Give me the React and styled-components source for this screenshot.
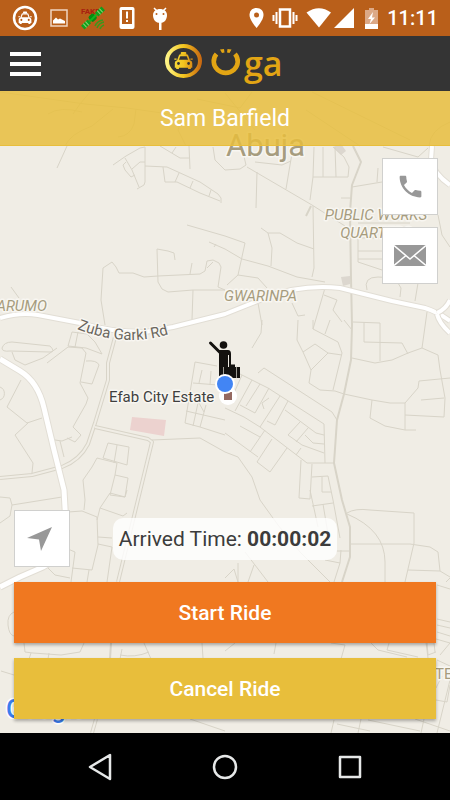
import styled, { createGlobalStyle } from "styled-components";

const GlobalStyle = createGlobalStyle`
  * {
    box-sizing: border-box;
  }

  body {
    margin: 0;
    background-color: #000;
    font-family: Roboto, "Liberation Sans", sans-serif;
  }

  button {
    margin: 0;
    padding: 0;
    border: none;
    background: none;
    font-family: inherit;
    cursor: pointer;
  }

  svg {
    display: block;
  }
`;

const Screen = styled.div`
  display: flex;
  flex-direction: column;
  min-height: 100vh;
`;

const StatusBar = styled.div`
  display: flex;
  justify-content: space-between;
  align-items: center;
  height: 36px;
  padding: 0 12px;
  background-color: #b95f1a;
`;

const StatusGroup = styled.div`
  display: flex;
  align-items: center;
  gap: ${({ $gap }) => $gap};
`;

const Clock = styled.time`
  color: white;
  font-size: 20px;
  font-weight: 500;
  line-height: 24px;
`;

const Header = styled.header`
  display: grid;
  grid-template-columns: 1fr auto 1fr;
  align-items: center;
  height: 55px;
  padding: 0 10px;
  background-color: #343434;
`;

const MenuButton = styled.button`
  display: flex;
  flex-direction: column;
  gap: 6px;
  width: 31px;
`;

const MenuLine = styled.span`
  height: 4px;
  background-color: white;
`;

const MapArea = styled.main`
  position: relative;
  flex: 1;
  display: flex;
  flex-direction: column;
  overflow: hidden;
  background-color: #f0ede5;
`;

const MapCanvas = styled.svg`
  position: absolute;
  inset: 0;
  width: 100%;
  height: 100%;
`;

const Overlay = styled.div`
  position: relative;
  flex: 1;
  display: flex;
  flex-direction: column;
  justify-content: space-between;
`;

const RiderName = styled.h1`
  margin: 0;
  height: 55px;
  border-bottom: 1px solid #e8be3c;
  background-color: rgba(231, 190, 60, 0.84);
  color: white;
  font-size: 23px;
  font-weight: 400;
  line-height: 56px;
  text-align: center;
`;

const ContactList = styled.div`
  display: flex;
  flex-direction: column;
  align-items: flex-end;
  gap: 12px;
  padding: 12px 12px 0;
`;

const SquareButton = styled.button`
  display: flex;
  justify-content: center;
  align-items: center;
  width: 56px;
  height: 57px;
  border: 1px solid #d0d0ce;
  background-color: white;
`;

const Actions = styled.div`
  display: flex;
  flex-direction: column;
  gap: 15px;
  padding: 0 14px 14px;
`;

const TimeRow = styled.div`
  display: grid;
  grid-template-columns: 1fr auto 1fr;
  align-items: center;
`;

const ArrivedTime = styled.div`
  padding: 0 6px;
  border-radius: 10px;
  background-color: rgba(255, 255, 255, 0.8);
  color: #3c3c3c;
  font-size: 21px;
  line-height: 42px;
`;

const RideButton = styled.button`
  height: 61px;
  background-color: ${({ $color }) => $color};
  box-shadow: 0 2px 3px rgba(0, 0, 0, 0.3);
  color: white;
  font-size: 21px;
  font-weight: 500;
`;

const NavBar = styled.nav`
  display: flex;
  height: 67px;
  padding: 0 38px;
  background-color: black;
`;

const NavButton = styled.button`
  flex: 1;
  display: flex;
  justify-content: center;
  align-items: center;
`;

const Taxi = ({ fill, hole }) => (
  <g fill={fill}>
    <rect x="9" y="0" width="6" height="3" rx="1" />
    <path d="M5 9 7 3.500Q7.500 2.500 8.500 2.500H15.500Q16.500 2.500 17 3.500L19 9Q21.500 9.500 21.500 12V17H20V18.500H17V17H7V18.500H4V17H2.500V12Q2.500 9.500 5 9Z" />
    <path d="M2 7H4.500V8.500H2ZM19.500 7H22V8.500H19.500Z" />
    <path d="M7 8.500 8.500 4.500H15.500L17 8.500Z" fill={hole} />
    <circle cx="6.500" cy="12.500" r="1.500" fill={hole} />
    <circle cx="17.500" cy="12.500" r="1.500" fill={hole} />
  </g>
);

const TaxiStatusIcon = () => (
  <svg width="26" height="26" viewBox="0 0 26 26">
    <circle cx="13" cy="13" r="11" fill="none" stroke="white" strokeWidth="2.500" />
    <g transform="translate(5 6.500) scale(0.670)">
      <Taxi fill="white" hole="#b95f1a" />
    </g>
  </svg>
);

const PictureIcon = () => (
  <svg width="18" height="18" viewBox="0 0 18 18">
    <rect x="1" y="1" width="16" height="16" fill="none" stroke="#efd5c2" strokeWidth="1.500" />
    <path d="M3 14.500V11.500L6 8.500 8 10.500 10 9.500 12 10.500 15 12V14.500Z" fill="white" />
  </svg>
);

const FakeGpsIcon = () => (
  <svg width="26" height="26" viewBox="0 0 26 26">
    <text x="1" y="9" fill="#a82010" fontSize="8" fontWeight="700" fontFamily="Roboto, sans-serif">
      FAKE
    </text>
    <g transform="rotate(-43 13 13)">
      <rect x="-1" y="10.500" width="9" height="5" fill="#10a01c" />
      <rect x="18" y="10.500" width="9" height="5" fill="#10a01c" />
      <rect x="9.500" y="9" width="7" height="7" rx="2" fill="#078c12" />
      <path d="M2 10.500V15.500M5 10.500V15.500M21 10.500V15.500M24 10.500V15.500" stroke="#8bd072" />
      <path d="M8 13H18" stroke="#12b51e" strokeWidth="2" />
    </g>
    <path d="M15 21Q17 16 23 15M17 23Q19 18 24 17M20 24Q21 21 24 20" fill="none" stroke="#3a991c" strokeWidth="1.500" />
  </svg>
);

const PhoneAlertIcon = () => (
  <svg width="18" height="24" viewBox="0 0 18 24">
    <rect x="1.500" y="1" width="15" height="22" rx="2" fill="white" />
    <rect x="4" y="4" width="10" height="14" fill="#b95f1a" />
    <path d="M8 5.500H10V12.500H8ZM8 14H10V16H8Z" fill="white" />
  </svg>
);

const DebugIcon = () => (
  <svg width="24" height="24" viewBox="0 0 24 24">
    <path d="M6 2 8.500 4.500M18 2 15.500 4.500" stroke="white" strokeWidth="1.500" />
    <path d="M5 9C5 1 19 1 19 9C19 14 16 17 12 17S5 14 5 9Z" fill="white" />
    <rect x="11" y="16" width="2.500" height="8" fill="white" />
    <circle cx="8.500" cy="8" r="1" fill="#b95f1a" />
    <circle cx="15.500" cy="8" r="1" fill="#b95f1a" />
  </svg>
);

const PinIcon = () => (
  <svg width="15" height="20" viewBox="0 0 15 20">
    <path d="M7.500 0C3 0 0.500 3.200 0.500 7C0.500 12 7.500 20 7.500 20S14.500 12 14.500 7C14.500 3.200 12 0 7.500 0Z" fill="white" />
    <circle cx="7.500" cy="7" r="2.500" fill="#b95f1a" />
  </svg>
);

const VibrateIcon = () => (
  <svg width="26" height="20" viewBox="0 0 26 20">
    <rect x="8" y="1.500" width="10" height="17" fill="none" stroke="white" strokeWidth="2.500" />
    <path d="M4.500 4V16M21.500 4V16" stroke="white" strokeWidth="2" />
    <path d="M1.500 7V13M24.500 7V13" stroke="white" strokeWidth="2" />
  </svg>
);

const SignalIcon = () => (
  <svg width="50" height="20" viewBox="0 0 50 20">
    <path d="M0.500 4.500Q13 -4 25 4.500L13 19.500Z" fill="white" />
    <path d="M48 0V20H28Z" fill="white" />
  </svg>
);

const BatteryIcon = () => (
  <svg width="15" height="21" viewBox="0 0 15 21">
    <path d="M5 0H10V2H14V21H1V2H5Z" fill="#dca987" />
    <path d="M1 16H14V21H1Z" fill="white" />
    <path d="M9 4 4 11H7L5.500 16 11 9.500H8Z" fill="white" />
  </svg>
);

const Logo = () => (
  <svg width="122" height="46" viewBox="164 40 122 46" role="img" aria-label="Oga">
    <defs>
      <linearGradient id="gold" gradientUnits="userSpaceOnUse" x1="166" x2="201" y1="0" y2="0">
        <stop offset="0" stopColor="#fff68a" />
        <stop offset="0.500" stopColor="#f3c51f" />
        <stop offset="1" stopColor="#c96a12" />
      </linearGradient>
      <linearGradient id="goldCar" gradientUnits="userSpaceOnUse" x1="2" x2="22" y1="0" y2="0">
        <stop offset="0" stopColor="#f7d838" />
        <stop offset="0.500" stopColor="#f3c51f" />
        <stop offset="1" stopColor="#d98a16" />
      </linearGradient>
    </defs>
    <ellipse cx="183.500" cy="60" rx="16.500" ry="15" fill="none" stroke="url(#gold)" strokeWidth="4" />
    <g transform="translate(172.500 51) scale(0.920)">
      <Taxi fill="url(#goldCar)" hole="#343434" />
    </g>
    <path d="M216.500 53A12 11.500 0 1 0 235 53" fill="none" stroke="#e2a514" strokeWidth="4.600" />
    <path d="M220 48.500 224 48 224.500 51.500 222 52ZM231.500 48.500 227.500 48 227 51.500 229.500 52Z" fill="#e2a514" />
    <text x="244" y="75" fill="#e2a514" fontSize="34" fontWeight="600" fontFamily="'Open Sans', 'Noto Sans', sans-serif">
      ga
    </text>
  </svg>
);

const PhoneIcon = () => (
  <svg width="29" height="29" viewBox="0 0 24 24">
    <path
      d="M6.620 10.790c1.440 2.830 3.760 5.140 6.590 6.590l2.200-2.200c.270-.270.670-.360 1.020-.240 1.120.370 2.330.570 3.570.570.550 0 1 .450 1 1V20c0 .550-.450 1-1 1-9.390 0-17-7.610-17-17 0-.550.450-1 1-1h3.500c.550 0 1 .450 1 1 0 1.250.200 2.450.570 3.570.110.350.030.740-.250 1.020l-2.200 2.200z"
      fill="#989898"
    />
  </svg>
);

const MailIcon = () => (
  <svg width="32" height="21" viewBox="0 0 32 21">
    <rect width="32" height="21" fill="#989898" />
    <path d="M0 0.500 16 14 32 0.500M0 20.500 12 10.500M32 20.500 20 10.500" fill="none" stroke="white" strokeWidth="1.500" />
  </svg>
);

const LocateIcon = () => (
  <svg width="30" height="26" viewBox="0 0 30 26">
    <path d="M25 1 14 25 12 13.500 0 12Z" fill="#989898" />
  </svg>
);

const lanes = [
  // north west
  "M67 146 57 168M113 165 126 156 140 148 145 147V182L144 185 137 189M125 158 132 170 139 187",
  "M126 162 123 165 125 170 131 177 135 175M132 169 140 162H145M145 166 167 167 200 182 218 194 221 198V203",
  "M163 167 165 182H177L200 193 220 201M179 173 175 182M193 181 190 188M211 190 209 196",
  "M160 146 180 158H189M189 146 190 169M176 147 172 153M213 147 215 160 225 170 240 169 246 165 242 148",
  "M187 225 225 236M209 242 225 249M216 244 214 247M11 287 19 298",
  "M175 260 174 253 168 251 157 249 158 282 162 289 168 292 193 290H225M192 263 190 274M193 290 192 320",
  "M105 325 101 300 103 268 112 262 116 267 119 273H133L144 277 158 276 200 274 205 271 207 261 213 260 219 263 221 267 218 287 225 290M207 268 213 262",
  // north east
  "M247 167 312 205 345 226M293 148 290 165 286 189M255 162 282 165 291 161M257 172 256 208",
  "M323 147V177M335 147 336 177M314 147 313 177 310 200M313 177H348L349 167 344 157 333 147",
  "M313 206 314 268 312 277M352 187 382 182M341 198H350M377 182 378 168",
  "M261 228 268 233H280L297 243 314 249M268 233 272 248 271 266",
  "M225 236 245 243 238 275 227 285M225 249 242 259 268 266 297 277 325 282M238 275 258 278 267 288",
  "M358 223H410M382 238H358V262L382 270M358 251H382M358 259H382",
  "M367 290Q363 277 378 277L395 278 401 288 400 297M418 283 415 301M438 215 442 235 450 247",
  "M383 147 418 157 428 148M258 303 262 325M292 303 298 316 305 315M325 288 313 329M324 295 337 300 333 310 342 322M427 312 422 348",
  // west
  "M2 348Q4 342 12 342L50 346Q56 352 50 352L10 351Q2 352 2 348M12 352 15 360 25 365 43 358 57 348",
  "M72 332 87 334 95 342 102 354 86 348 68 346ZM78 332 75 347",
  "M47 363 68 347 82 348 86 353 80 383 88 398 86 404 73 427 81 435 75 442 67 438M72 437 62 441 55 440M60 441 64 457",
  "M86 361Q97 360 99 365L92 384 81 382M21 380 7 407 27 423 42 418M28 423 15 435 33 463 32 473M0 387A7 7 0 0 1 0 400",
  "M108 443 129 447 127 465 103 458ZM117 445 114 463M97 458 117 463 115 475 128 478 125 497 110 495",
  "M97 458 92 467 83 480 85 500 84 510M115 475 110 495",
  "M0 497 10 498 12 505 62 497M12 505 10 516 0 523M68 512 82 511 97 517 98 545 92 570 72 568",
  "M97 520 100 508 123 516 127 513M100 508 110 493 125 497 127 490M98 537 112 538M98 544 112 547 107 582M68 549 75 552 71 582M89 570 87 582M47 567 55 575 70 578",
  // estate grid
  "M195 362 217 366M195 362 185 423 200 427 225 435M193 383 218 385M186 411 225 420M202 370 199 383M211 371 210 385M198 403 193 426M206 405 200 427M190 397 199 403 204 412",
  "M262 320 261 333 252 348M240 374 268 388 324 424 325 463M258 373 264 368 332 412 337 420",
  "M225 408 244 417 260 427 307 463 334 463M252 380 235 411M260 384 246 406M242 375 234 393M269 388 255 413 240 405M269 398 262 403 264 409",
  "M280 396 260 427M288 401 275 425 267 421M285 410 316 433 324 435M300 422 288 435 302 445 324 453M305 435 313 443 324 444M308 428 296 442",
  "M225 433 258 457M287 448 270 472 257 462 272 439M265 430 250 452M240 426 260 437M301 448 296 455",
  "M225 452 238 457 252 477 260 500 278 525 300 552 330 582M152 440 200 438 225 452",
  "M301 460 299 498 310 499 312 464M312 477 328 476 333 500 340 538M322 477V492H331M312 506 333 503M310 490 318 527M323 504 328 534",
  // east
  "M298 320 297 340 303 352 311 370 309 383 320 390 335 391 344 394M313 320V329L338 342 342 353 333 390M303 352 315 344 328 353 342 355M328 353 311 370M325 334 330 320M344 320 352 330",
  "M344 394 372 400 390 403H405L418 388 419 381 450 378M352 358 375 363 392 360 408 353 422 348 438 355 440 370 445 398 444 417 405 415",
  "M372 400 370 418 385 426 405 430H416M405 403V430M421 400 444 398M353 322 380 323V361M364 322V342L402 343 408 354",
  "M347 513Q355 508 370 510L414 513V543L405 582M347 514Q385 530 385 562V582M350 544H410L430 547 438 552 440 571 450 577M408 570 440 571",
  "M337 551H350M325 560 340 563 334 582M341 550 340 563M245 552 268 582M225 578 234 569 238 582M238 563V582M254 565 248 582M446 582 450 578",
  // south
  "M14 612Q7 615 8 625T14 636M24 643 25 652 33 653 61 655 80 652 84 643M31 653 29 659M49 653 48 659M120 659 122 649M120 655Q135 658 149 652M144 643 151 659M426 642 428 658M437 619 450 622M437 625 450 628M437 632 450 636M436 639 450 643",
  "M1 671 14 675M331 643 345 645 341 659M371 643 378 650 407 657M389 643 387 650 418 657M435 652 434 643M440 655 450 643M415 719 450 731M436 700 447 702 450 685",
  "M450 680 437 733M334 720 331 733M337 724 370 731M361 719 358 733M368 720 420 731M424 719 421 733M437 660 450 666M436 688 442 676",
  "M427 643 428 655 436 652M276 643 274 654M202 643 203 658M225 651 235 643M437 585 450 589M190 719 225 731",
  // under the name banner
  "M0 92 85 104 127 108 183 116M90 92 80 104 73 114M48 114Q60 106 82 112M136 109 134 124Q130 136 118 137M65 146Q70 134 92 126L113 109M183 116 178 130 186 146M197 99 240 108 252 92M225 93 255 130M306 110 360 146M312 92 410 140M429 146Q430 130 450 122",
];

const streets = [
  "M353 146 361 162 352 185 350 212 351 278 352 325 351 360 344 394 337 420 334 463 342 500 350 527V557L342 582",
  "M311 206 306 216",
  "M111 643 110 659",
];

const doubleStreets = [
  "M115 337 108 363V380L95 423 88 444Q80 460 62 467L32 475 0 478",
  "M95 427 148 439 152 442 118 582",
  "M96 719 92 733",
];

const highways = [
  "M0 318Q20 312 38 315L80 323Q110 332 145 332L173 327 225 314 265 298Q300 284 340 288L392 301 425 308Q438 312 450 321",
  "M432 146 431 160Q434 174 450 185",
  "M437 313Q446 309 450 300M437 314Q439 323 450 333",
];

const RideMap = () => (
  <MapCanvas viewBox="0 91 450 642" preserveAspectRatio="xMidYMid slice" aria-hidden="true">
    <defs>
      <path id="garki" d="M77 329Q125 348 170 334" />
    </defs>
    <rect x="0" y="91" width="450" height="642" fill="#f0ede5" />
    <path d="M132 417 166 420 164 436 130 430Z" fill="#ecd2cf" />
    <path d="M341 277 350 276V284L343 286ZM333 147 341 144 346 151 341 155Z" fill="#dcd7cf" />
    <g fill="none" stroke="#d8d4c8" strokeLinejoin="round">
      {lanes.map((d) => (
        <path key={d} d={d} />
      ))}
      {streets.map((d) => (
        <path key={d} d={d} strokeWidth="2" />
      ))}
      {doubleStreets.map((d) => (
        <g key={d}>
          <path d={d} strokeWidth="4" />
          <path d={d} stroke="#f0ede5" strokeWidth="2" />
        </g>
      ))}
      {highways.map((d) => (
        <g key={d}>
          <path d={d} stroke="#e2ded5" strokeWidth="6" />
          <path d={d} stroke="white" strokeWidth="4" />
        </g>
      ))}
      <path d="M0 359 20 371Q38 382 44 408L54 450 64 490 66 525Q66 555 43 567L20 577 0 587" stroke="#e2ded5" strokeWidth="7" />
      <path d="M0 359 20 371Q38 382 44 408L54 450 64 490 66 525Q66 555 43 567L20 577 0 587" stroke="white" strokeWidth="5" />
    </g>
    <g
      fontFamily="Roboto, sans-serif"
      fontSize="16"
      fill="#a69c7e"
      stroke="#f8f6f1"
      strokeWidth="3"
      strokeLinejoin="round"
      paintOrder="stroke"
    >
      <text x="226" y="156" fontSize="31">Abuja</text>
      <g fontStyle="italic" fontSize="15">
        <text x="47" y="311" textAnchor="end">KARUMO</text>
        <text x="224" y="301">GWARINPA</text>
        <text x="376" y="220" textAnchor="middle">PUBLIC WORKS</text>
        <text x="376" y="238" textAnchor="middle">QUARTERS</text>
        <text x="435" y="679" fontStyle="normal">TE</text>
      </g>
      <text fontSize="15" fill="#6b675f">
        <textPath href="#garki">Zuba Garki Rd</textPath>
      </text>
      <text x="109" y="402" fontSize="15" fill="#3f3f3f">Efab City Estate</text>
      <text x="6" y="718" fontSize="25" fontWeight="500" fill="#3b7ded" stroke="white">Google</text>
    </g>
    {/* rider waiting at the pickup point */}
    <g fill="#14120f">
      <circle cx="223.500" cy="345" r="3.800" />
      <path d="M220 352.500 210.500 343" fill="none" stroke="#14120f" strokeWidth="3" strokeLinecap="round" />
      <path d="M219 350H228Q231 350 231 354V365H229V355H228V380H219Z" />
      <path d="M226 367H229V364.500H235V367H240V378H226Z" />
      <path d="M236.500 366V378M223.500 367V378" stroke="#d9d5cc" strokeWidth="0.700" />
    </g>
    <circle cx="228" cy="396" r="9" fill="white" />
    <rect x="224" y="392" width="8" height="8" fill="#94685f" />
    <circle cx="225" cy="384" r="10" fill="white" />
    <circle cx="225" cy="384" r="8" fill="#4285f4" />
  </MapCanvas>
);

const App = () => {
  return (
    <Screen>
      <GlobalStyle />
      <StatusBar>
        <StatusGroup $gap="12px">
          <TaxiStatusIcon />
          <PictureIcon />
          <FakeGpsIcon />
          <PhoneAlertIcon />
          <DebugIcon />
        </StatusGroup>
        <StatusGroup $gap="8px">
          <PinIcon />
          <VibrateIcon />
          <SignalIcon />
          <BatteryIcon />
          <Clock>11:11</Clock>
        </StatusGroup>
      </StatusBar>
      <Header>
        <MenuButton aria-label="Menu">
          <MenuLine />
          <MenuLine />
          <MenuLine />
        </MenuButton>
        <Logo />
      </Header>
      <MapArea>
        <RideMap />
        <Overlay>
          <div>
            <RiderName>Sam Barfield</RiderName>
            <ContactList>
              <SquareButton aria-label="Call rider">
                <PhoneIcon />
              </SquareButton>
              <SquareButton aria-label="Message rider">
                <MailIcon />
              </SquareButton>
            </ContactList>
          </div>
          <Actions>
            <TimeRow>
              <SquareButton aria-label="My location">
                <LocateIcon />
              </SquareButton>
              <ArrivedTime>
                Arrived Time: <b>00:00:02</b>
              </ArrivedTime>
            </TimeRow>
            <RideButton $color="#f07820">Start Ride</RideButton>
            <RideButton $color="#e8be3b">Cancel Ride</RideButton>
          </Actions>
        </Overlay>
      </MapArea>
      <NavBar>
        <NavButton aria-label="Back">
          <svg width="24" height="28" viewBox="0 0 24 28">
            <path d="M22 2V26L2 14Z" fill="none" stroke="#e6e8e8" strokeWidth="2.500" strokeLinejoin="round" />
          </svg>
        </NavButton>
        <NavButton aria-label="Home">
          <svg width="26" height="26" viewBox="0 0 26 26">
            <circle cx="13" cy="13" r="11" fill="none" stroke="#e6e8e8" strokeWidth="2.500" />
          </svg>
        </NavButton>
        <NavButton aria-label="Recent apps">
          <svg width="24" height="24" viewBox="0 0 24 24">
            <rect x="2" y="2" width="20" height="20" fill="none" stroke="#e6e8e8" strokeWidth="2.500" strokeLinejoin="round" />
          </svg>
        </NavButton>
      </NavBar>
    </Screen>
  );
};

export default App;
